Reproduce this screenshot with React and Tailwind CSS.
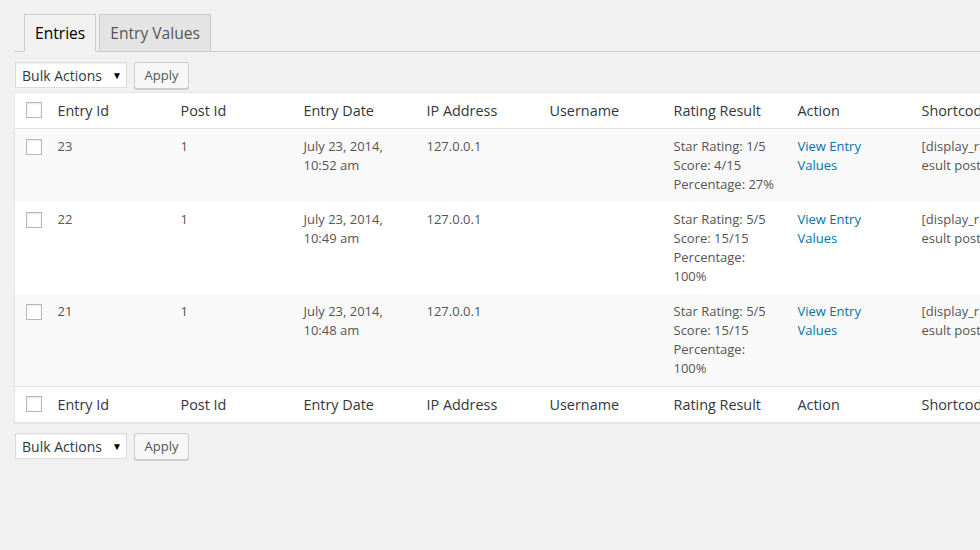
import React from "react";

const entries = [
  { id: "23", post: "1", date: ["July 23, 2014,", "10:52 am"], ip: "127.0.0.1", rating: ["Star Rating: 1/5", "Score: 4/15", "Percentage: 27%"], alt: true },
  { id: "22", post: "1", date: ["July 23, 2014,", "10:49 am"], ip: "127.0.0.1", rating: ["Star Rating: 5/5", "Score: 15/15", "Percentage:", "100%"], alt: false },
  { id: "21", post: "1", date: ["July 23, 2014,", "10:48 am"], ip: "127.0.0.1", rating: ["Star Rating: 5/5", "Score: 15/15", "Percentage:", "100%"], alt: true },
];

const cols = [
  { label: "Entry Id", w: "w-[123px]" },
  { label: "Post Id", w: "w-[123px]" },
  { label: "Entry Date", w: "w-[123px]" },
  { label: "IP Address", w: "w-[123px]" },
  { label: "Username", w: "w-[124px]" },
  { label: "Rating Result", w: "w-[124px]" },
  { label: "Action", w: "w-[124px]" },
  { label: "Shortcode", w: "w-[200px]" },
];

function Checkbox() {
  return <span className="block w-4 h-4 bg-white border border-[#b4b9be] shadow-[inset_0_1px_2px_rgba(0,0,0,0.1)]" />;
}

function Tablenav() {
  return (
    <div className="flex items-start gap-[7px] h-[27px]">
      <div className="flex items-center justify-between w-[112px] h-[26px] bg-white border border-[#ddd] shadow-[inset_0_1px_2px_rgba(0,0,0,0.07)] pl-[6px] pr-[4px] text-[14px] text-[#32373c]">
        <span>Bulk Actions</span>
        <span className="text-[10px] text-black">▼</span>
      </div>
      <button className="w-[55px] h-[27px] bg-[#f7f7f7] border border-[#ccc] rounded-[3px] shadow-[0_1px_0_#ccc] text-[13px] text-[#555] leading-none">
        Apply
      </button>
    </div>
  );
}

function HeadRow({ top }) {
  return (
    <tr className={top ? "border-b border-[#e1e1e1]" : "border-t border-[#e1e1e1]"}>
      <th className="w-[33px] pl-[11px] pt-[9px] pb-[9px] align-top">
        <Checkbox />
      </th>
      {cols.map(c => (
        <th key={c.label} className={`${c.w} px-[10px] py-[8px] text-left font-normal text-[14.4px] leading-[19px] text-[#32373c] whitespace-nowrap`}>
          {c.label}
        </th>
      ))}
    </tr>
  );
}

export default function App() {
  return (
    <div className="w-[980px] h-[550px] overflow-hidden bg-[#f1f1f1] pt-[14px] font-['Open_Sans',sans-serif] text-[#555]">
      {/* Tabs */}
      <div className="ml-[14px] flex items-end gap-[3px] border-b border-[#ccc] pl-[10px]">
        <div className="-mb-px px-[10px] py-[6px] border border-[#ccc] border-b-[#f1f1f1] bg-[#f1f1f1] text-[15.6px] leading-[24px] text-black">
          Entries
        </div>
        <div className="px-[10px] py-[6px] border border-[#ccc] border-b-0 bg-[#e4e4e4] text-[15.6px] leading-[24px] text-[#555]">
          Entry Values
        </div>
      </div>

      <div className="pl-[15px] mt-[10px]">
        <Tablenav />
      </div>

      <div className="ml-[14px] mt-[3px] w-[1200px]">
        <table className="table-fixed border-collapse bg-white border border-[#e5e5e5] shadow-[0_1px_1px_rgba(0,0,0,0.04)]">
          <thead>
            <HeadRow top />
          </thead>
          <tbody>
            {entries.map(e => (
              <tr key={e.id} className={e.alt ? "bg-[#f9f9f9]" : "bg-white"}>
                <td className="pl-[11px] pt-[10px] align-top">
                  <Checkbox />
                </td>
                <td className="px-[10px] py-[8px] align-top text-[13px] leading-[19px]">{e.id}</td>
                <td className="px-[10px] py-[8px] align-top text-[13px] leading-[19px]">{e.post}</td>
                <td className="px-[10px] py-[8px] align-top text-[13px] leading-[19px]">
                  {e.date.map(l => <div key={l}>{l}</div>)}
                </td>
                <td className="px-[10px] py-[8px] align-top text-[13px] leading-[19px]">{e.ip}</td>
                <td className="px-[10px] py-[8px] align-top text-[13px] leading-[19px]"></td>
                <td className="px-[10px] py-[8px] align-top text-[13px] leading-[19px]">
                  {e.rating.map(l => <div key={l}>{l}</div>)}
                </td>
                <td className="px-[10px] py-[8px] align-top text-[13px] leading-[19px] text-[#0073aa]">
                  <div>View Entry</div>
                  <div>Values</div>
                </td>
                <td className="px-[10px] py-[8px] align-top text-[13px] leading-[19px] whitespace-nowrap">
                  <div>[display_rating_r</div>
                  <div>esult post_id="{e.post}"]</div>
                </td>
              </tr>
            ))}
          </tbody>
          <tfoot>
            <HeadRow />
          </tfoot>
        </table>
      </div>

      <div className="pl-[15px] mt-[10px]">
        <Tablenav />
      </div>
    </div>
  );
}
